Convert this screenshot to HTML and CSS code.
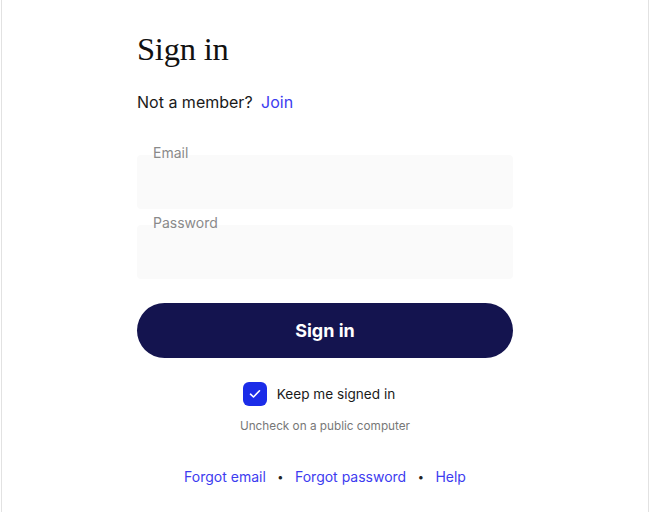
FILE: index.html
```html
<!DOCTYPE html>
<html lang="en">

<head>
    <meta charset="UTF-8" />
    <meta name="viewport" content="width=device-width, initial-scale=1.0" />
    <title>Sign in</title>
    <link rel="stylesheet" href="styles.css">
</head>

<body>
    <div class="frame">
        <main class="signin">
            <h1>Sign in</h1>
            <p class="member">Not a member? <a href="">Join</a></p>

            <form class="form">
                <div class="field">
                    <label for="email">Email</label>
                    <input type="email" id="email" />
                </div>
                <div class="field">
                    <label for="password">Password</label>
                    <input type="password" id="password" />
                </div>

                <button type="button" class="btn">Sign in</button>

                <div class="keep">
                    <span class="check">
                        <svg width="12" height="10" viewBox="0 0 12 10">
                            <path d="M1.5 5.2 L4.5 8 L10.5 1.8" fill="none" stroke="#fff" stroke-width="1.6"
                                stroke-linecap="round" stroke-linejoin="round" />
                        </svg>
                    </span>
                    <span>Keep me signed in</span>
                </div>
                <p class="hint">Uncheck on a public computer</p>
            </form>

            <nav class="links">
                <a href="">Forgot email</a>
                <span class="dot">&bull;</span>
                <a href="">Forgot password</a>
                <span class="dot">&bull;</span>
                <a href="">Help</a>
            </nav>
        </main>
    </div>
</body>

</html>
```

FILE: styles.css
```css
html,
body {
    margin: 0;
    padding: 0;
    background: #fff;
}

body {
    font-family: Inter, "Noto Sans", sans-serif;
    color: #1a1a1a;
}

.frame {
    margin-left: 1px;
    width: 646px;
    min-height: 512px;
    border-left: 1px solid #e2e2e2;
    border-right: 1px solid #e2e2e2;
}

.signin {
    width: 376px;
    margin: 0 auto;
    padding-top: 27px;
}

.signin h1 {
    margin: 0;
    font-family: "Liberation Serif", serif;
    font-weight: normal;
    font-size: 32.5px;
    line-height: 44px;
    color: #111;
    letter-spacing: -0.2px;
}

.member {
    margin: 21px 0 0;
    font-size: 16px;
    line-height: 20px;
}

.member a {
    margin-left: 4px;
}

a {
    color: #3d3cf0;
    text-decoration: none;
}

.form {
    margin-top: 32px;
}

.field {
    margin-bottom: 5px;
}

.field label {
    display: block;
    position: relative;
    padding-left: 16px;
    margin-bottom: -7px;
    font-size: 14px;
    line-height: 18px;
    color: #8a8a8a;
}

.field input {
    display: block;
    box-sizing: border-box;
    width: 100%;
    height: 54px;
    border: 0;
    border-radius: 4px;
    background: #fafafa;
    outline: none;
}

.btn {
    display: block;
    width: 100%;
    height: 55px;
    margin-top: 24px;
    border: 0;
    border-radius: 28px;
    background: #14144f;
    color: #fff;
    font-family: Inter, sans-serif;
    font-weight: 700;
    font-size: 18px;
}

.keep {
    display: flex;
    justify-content: center;
    align-items: center;
    gap: 10px;
    margin-top: 24px;
    padding-right: 12px;
    font-size: 13.6px;
    color: #1a1a1a;
}

.check {
    display: flex;
    align-items: center;
    justify-content: center;
    width: 24px;
    height: 24px;
    border-radius: 6px;
    background: #1b2ce8;
}

.hint {
    margin: 13px 0 0;
    text-align: center;
    font-size: 11.75px;
    color: #777;
}

.links {
    display: flex;
    justify-content: center;
    align-items: center;
    gap: 11.5px;
    margin-top: 35px;
    font-size: 14px;
}

.dot {
    font-size: 11px;
    color: #222;
}
```
